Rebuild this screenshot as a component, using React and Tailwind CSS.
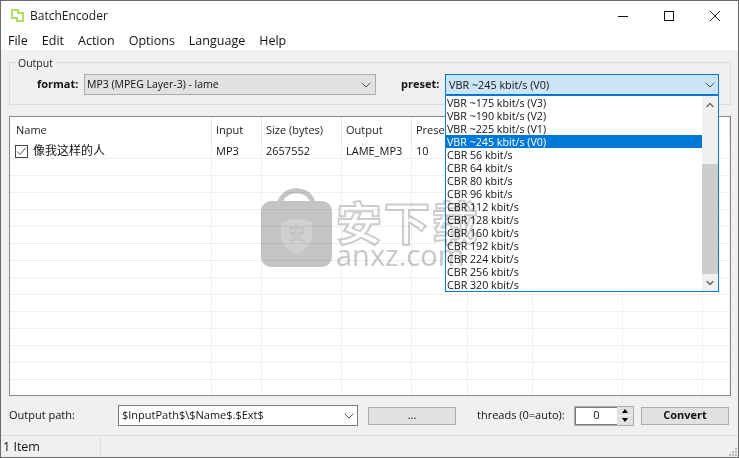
import { ChevronDown, ChevronUp } from "lucide-react";

const font = "font-['Open_Sans','Noto_Sans_CJK_SC',sans-serif]";

const columns = [
  { name: "Name", width: "w-[202px]" },
  { name: "Input", width: "w-[50px]" },
  { name: "Size (bytes)", width: "w-[80px]" },
  { name: "Output", width: "w-[70px]" },
  { name: "Preset", width: "w-[56px]" },
  { name: "", width: "w-[65px]" },
  { name: "", width: "w-[90px]" },
  { name: "", width: "w-[80px]" },
  { name: "", width: "w-[27px]" },
];

const presets = [
  "VBR ~175 kbit/s (V3)",
  "VBR ~190 kbit/s (V2)",
  "VBR ~225 kbit/s (V1)",
  "VBR ~245 kbit/s (V0)",
  "CBR 56 kbit/s",
  "CBR 64 kbit/s",
  "CBR 80 kbit/s",
  "CBR 96 kbit/s",
  "CBR 112 kbit/s",
  "CBR 128 kbit/s",
  "CBR 160 kbit/s",
  "CBR 192 kbit/s",
  "CBR 224 kbit/s",
  "CBR 256 kbit/s",
  "CBR 320 kbit/s",
];

function TitleBar() {
  return (
    <div className="flex h-[29px] items-center bg-white pl-[10px] text-[12px] text-[#1a1a1a]">
      <svg width="13" height="13" viewBox="0 0 13 13" className="mr-[6px]" fill="none">
        <path d="M1 1h6v3h5v8H6V9H1z" stroke="#b3dc6c" strokeWidth="2" />
      </svg>
      <span>BatchEncoder</span>
      <div className="ml-auto flex text-[#111]">
        <div className="flex h-[29px] w-[46px] items-center justify-center">
          <svg width="10" height="10" viewBox="0 0 10 10" stroke="currentColor" shapeRendering="crispEdges">
            <path d="M0 5.5h10" />
          </svg>
        </div>
        <div className="flex h-[29px] w-[46px] items-center justify-center">
          <svg width="10" height="10" viewBox="0 0 10 10" fill="none" stroke="currentColor" shapeRendering="crispEdges">
            <path d="M.5.5h9v9h-9z" />
          </svg>
        </div>
        <div className="flex h-[29px] w-[46px] items-center justify-center">
          <svg width="10" height="10" viewBox="0 0 10 10" stroke="currentColor" strokeWidth="0.9">
            <path d="M0 0l10 10M10 0L0 10" />
          </svg>
        </div>
      </div>
    </div>
  );
}

function MenuBar() {
  return (
    <div className="flex h-[20px] items-center gap-[14px] bg-white pl-[7px] pt-[3px] text-[12.5px] text-[#111]">
      {["File", "Edit", "Action", "Options", "Language", "Help"].map((m) => (
        <span key={m}>{m}</span>
      ))}
    </div>
  );
}

function OutputGroup() {
  return (
    <div className="relative ml-[8px] mr-[7px] mt-[12px] flex h-[43px] items-start border border-[#dcdcdc] pt-[11px] text-[11px]">
      <span className="absolute -top-[6px] left-[6px] bg-[#f0f0f0] px-[2px] text-[10.5px] leading-[13px] text-[#222]">
        Output
      </span>
      <span className="ml-[27px] mt-[3px] w-[47px] font-bold leading-[14px] text-[#111]">format:</span>
      <div className="flex h-[21px] w-[292px] items-center justify-between border border-[#acacac] bg-[#e1e1e1] pl-[2px] pr-[1px] text-[10.5px] text-[#111]">
        <span className="pt-[1px]">MP3 (MPEG Layer-3) - lame</span>
        <ChevronDown size={16} strokeWidth={1.5} className="text-[#555]" />
      </div>
      <span className="ml-[25px] mt-[3px] w-[44px] font-bold leading-[14px] text-[#111]">preset:</span>
      <div className="flex h-[21px] w-[274px] items-center justify-between border border-[#0078d7] bg-[#cce4f7] pl-[3px] text-[10.8px] text-[#111]">
        <span className="pt-[1px]">VBR ~245 kbit/s (V0)</span>
        <ChevronDown size={16} strokeWidth={1.5} className="text-[#555]" />
      </div>
    </div>
  );
}

function FileList() {
  const rows = Array.from({ length: 14 });
  return (
    <div className="ml-[8px] mr-[7px] mt-[11px] h-[280px] overflow-hidden border border-[#828790] bg-white text-[11px] text-[#111]">
      <div className="flex h-[26px]">
        {columns.map((c, i) => (
          <div
            key={i}
            className={`${c.width} flex shrink-0 items-center border-r border-[#e5e5e5] text-[#222] ${i === 0 ? "pl-[6px]" : "pl-[4px]"}`}
          >
            {c.name}
          </div>
        ))}
      </div>
      <div className="flex h-[16px] border-b border-[#f0f0f0]">
        {columns.map((c, i) => (
          <div
            key={i}
            className={`${c.width} flex shrink-0 items-center border-r border-[#f0f0f0] pt-[1px] ${i === 0 ? "pl-[6px]" : "pl-[4px]"}`}
          >
            {i === 0 && (
              <>
                <span className="ml-[-1px] mr-[5px] flex h-[13px] w-[13px] items-center justify-center border border-[#444]">
                  <svg width="11" height="11" viewBox="0 0 11 11" fill="none">
                    <path d="M1 5.5l3 3 6-7" stroke="#555" strokeWidth="1" />
                  </svg>
                </span>
                <span className="text-[12px]">像我这样的人</span>
              </>
            )}
            {i === 1 && "MP3"}
            {i === 2 && "2657552"}
            {i === 3 && "LAME_MP3"}
            {i === 4 && "10"}
          </div>
        ))}
      </div>
      {rows.map((_, r) => (
        <div key={r} className="flex h-[17px] border-b border-[#f0f0f0]">
          {columns.map((c, i) => (
            <div key={i} className={`${c.width} shrink-0 border-r border-[#f0f0f0]`} />
          ))}
        </div>
      ))}
    </div>
  );
}

function BottomBar() {
  return (
    <div className="ml-[8px] mr-[7px] mt-[9px] flex h-[21px] items-center text-[11px] text-[#111]">
      <span className="w-[109px]">Output path:</span>
      <div className="flex h-[21px] w-[240px] items-center justify-between border border-[#7a7a7a] bg-white pl-[3px]">
        <span>$InputPath$\$Name$.$Ext$</span>
        <ChevronDown size={16} strokeWidth={1.5} className="text-[#555]" />
      </div>
      <div className="ml-[10px] flex h-[18px] w-[88px] items-center justify-center border border-[#adadad] bg-[#e1e1e1]">
        ...
      </div>
      <span className="ml-[21px] w-[97px]">threads (0=auto):</span>
      <div className="flex h-[20px] w-[60px] border border-[#adadad]">
        <div className="flex flex-1 items-center justify-center border-y border-l border-[#7a7a7a] bg-white">0</div>
        <div className="flex w-[16px] flex-col gap-[1px] bg-[#f0f0f0]">
          <div className="flex flex-1 items-center justify-center bg-[#e1e1e1]">
            <span className="h-0 w-0 border-x-[3px] border-b-[4px] border-x-transparent border-b-black" />
          </div>
          <div className="flex flex-1 items-center justify-center bg-[#e1e1e1]">
            <span className="h-0 w-0 border-x-[3px] border-t-[4px] border-x-transparent border-t-black" />
          </div>
        </div>
      </div>
      <div className="ml-[7px] flex h-[18px] w-[88px] items-center justify-center border border-[#adadad] bg-[#e1e1e1] font-bold">
        Convert
      </div>
    </div>
  );
}

function StatusBar() {
  return (
    <div className="mt-auto flex h-[22px] items-center border-t border-[#dcdcdc] text-[12.5px] text-[#111]">
      <span className="w-[100px] border-r border-[#dcdcdc] pl-[2px] leading-[20px]">1 Item</span>
      <div className="ml-auto mr-[1px] mt-auto mb-[1px] grid grid-cols-3 gap-[1px]">
        {[0, 0, 1, 0, 1, 1, 1, 1, 1].map((on, i) => (
          <span key={i} className={`h-[2px] w-[2px] ${on ? "bg-[#b8b8b8]" : ""}`} />
        ))}
      </div>
    </div>
  );
}

function PresetDropdown() {
  return (
    <div className="absolute left-[444px] top-[94px] flex h-[197px] w-[274px] border border-[#0078d7] bg-white text-[10.7px] leading-[13px] text-[#111]">
      <div className="flex-1">
        {presets.map((p, i) => (
          <div key={p} className={`h-[13px] pl-[1px] pt-[1px] ${i === 3 ? "bg-[#0078d7] text-white" : ""}`}>
            {p}
          </div>
        ))}
      </div>
      <div className="flex w-[16px] flex-col bg-[#f0f0f0]">
        <div className="flex h-[17px] items-center justify-center">
          <ChevronUp size={12} strokeWidth={2.5} className="text-[#606060]" />
        </div>
        <div className="mt-[51px] h-[110px] bg-[#cdcdcd]" />
        <div className="mt-auto flex h-[17px] items-center justify-center">
          <ChevronDown size={12} strokeWidth={2.5} className="text-[#606060]" />
        </div>
      </div>
    </div>
  );
}

function Watermark() {
  return (
    <div className="pointer-events-none absolute left-[260px] top-[186px] flex items-start mix-blend-multiply">
      <svg width="71" height="80" viewBox="0 0 71 80">
        <path d="M18.5 18C21 -1 50 -1 52.5 18" fill="none" stroke="#c4c4c4" strokeWidth="5" />
        <rect x="0" y="14" width="71" height="66" rx="10" fill="#c4c4c4" />
        <path d="M20 35q15.500-6 31 0v17q-3 10-15.500 16q-12.500-6-15.500-16z" fill="#d0d0d0" />
        <text x="35.500" y="53" textAnchor="middle" fontSize="17" fontWeight="700" fill="#c4c4c4">
          安
        </text>
      </svg>
      <div className="ml-[4px] mt-[10px] flex flex-col">
        <span className="text-[46px] font-bold leading-[46px] tracking-[2px] text-white [-webkit-text-stroke:2px_#cdcdcd] font-['Noto_Sans_CJK_SC',sans-serif]">
          安下载
        </span>
        <span className="mt-[-3px] text-[29px] font-medium leading-[30px] text-[#c8c8c8] font-['Open_Sans',sans-serif]">
          anxz.com
        </span>
      </div>
    </div>
  );
}

export default function App() {
  return (
    <div className={`relative flex h-[458px] w-[739px] flex-col overflow-hidden border border-[#6a6a6a] bg-[#f0f0f0] ${font}`}>
      <TitleBar />
      <MenuBar />
      <OutputGroup />
      <FileList />
      <BottomBar />
      <StatusBar />
      <PresetDropdown />
      <Watermark />
    </div>
  );
}
